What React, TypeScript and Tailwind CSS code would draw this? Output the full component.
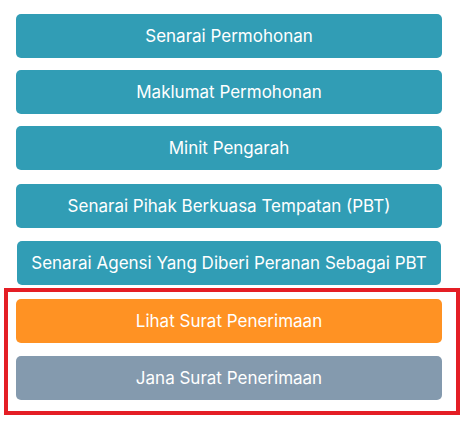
const topItems = [
  { label: 'Senarai Permohonan', mt: 'mt-[14px]' },
  { label: 'Maklumat Permohonan', mt: 'mt-3' },
  { label: 'Minit Pengarah', mt: 'mt-3' },
  { label: 'Senarai Pihak Berkuasa Tempatan (PBT)', mt: 'mt-[14px]' },
];

function MenuButton({ label, color, className = '' }: { label: string; color: string; className?: string }) {
  return (
    <button
      className={`flex h-[44px] w-full items-center justify-center rounded-[5px] text-[17px] leading-none text-white ${color} ${className}`}
    >
      {label}
    </button>
  );
}

export default function App() {
  return (
    <div
      className="h-[436px] w-[462px] bg-white"
      style={{ fontFamily: 'Inter, "Noto Sans", sans-serif' }}
    >
      <div className="w-[426px] pl-4 box-content">
        {topItems.map((item) => (
          <MenuButton key={item.label} label={item.label} color="bg-[#319db5]" className={item.mt} />
        ))}
        <div className="mt-[13px] pl-px pr-px">
          <MenuButton label="Senarai Agensi Yang Diberi Peranan Sebagai PBT" color="bg-[#319db5]" className="h-[42px]" />
        </div>
      </div>

      <div className="ml-1 mt-[3px] w-[456px] border-4 border-[#e41e25] pl-2 pr-[14px] pt-[7px] pb-[11px]">
        <MenuButton label="Lihat Surat Penerimaan" color="bg-[#ff9223]" className="h-[43px]" />
        <MenuButton label="Jana Surat Penerimaan" color="bg-[#849aae]" className="mt-[13px]" />
      </div>
    </div>
  );
}
